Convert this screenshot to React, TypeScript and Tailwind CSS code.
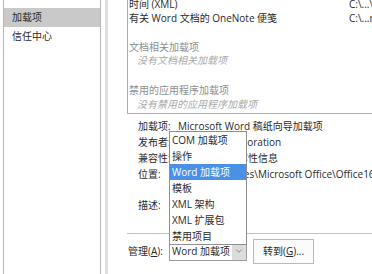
import React from "react";
import { ChevronDown } from "lucide-react";

const dropItems = ["COM 加载项", "操作", "Word 加载项", "模板", "XML 架构", "XML 扩展包", "禁用项目"];

const details = [
  { label: "加载项:", value: "Microsoft Word 稿纸向导加载项" },
  { label: "发布者:", value: "Microsoft Corporation" },
  { label: "兼容性:", value: "没有可用的兼容性信息" },
  { label: "位置:", value: "C:\\Program Files\\Microsoft Office\\Office16\\ADDINS" },
];

export default function App() {
  return (
    <div className="relative flex h-[274px] w-[372px] overflow-hidden bg-white font-['Open_Sans','Noto_Sans_CJK_SC',sans-serif] text-[10px] text-[#2a2a2a]">
      {/* left nav */}
      <div className="ml-[3px] w-[98px] shrink-0 border-x border-[#b8b8b8]">
        <div className="-mt-[11px] h-[19px] overflow-hidden pl-[8px] leading-[11px]">快速访问工具栏</div>
        <div className="h-[19px] bg-[#c9c9c9] pl-[8px] leading-[19px]">加载项</div>
        <div className="h-[19px] pl-[8px] leading-[19px]">信任中心</div>
      </div>
      <div className="ml-[4px] w-[3px] shrink-0 bg-[#e0e0e0]" />

      {/* main */}
      <div className="relative ml-[19px] flex flex-1 flex-col">
        <div className="-mt-px h-[115px] shrink-0 border-b border-l border-[#b0b0b0] pl-[1px]">
          <div className="-mt-[2px] flex h-[14px] leading-[14px]">
            <span className="w-[220px]">时间 (XML)</span>
            <span>C:\...\</span>
          </div>
          <div className="flex h-[14px] leading-[14px]">
            <span className="w-[220px]">有关 Word 文档的 OneNote 便笺</span>
            <span>C:\...r</span>
          </div>
          <div className="mt-[16px] h-[13px] leading-[13px] text-[#8e8e8e]">文档相关加载项</div>
          <div className="h-[13px] pl-[8px] italic leading-[13px] text-[#a8a8a8]">没有文档相关加载项</div>
          <div className="mt-[17px] h-[13px] leading-[13px] text-[#8e8e8e]">禁用的应用程序加载项</div>
          <div className="h-[14px] pl-[8px] italic leading-[14px] text-[#a8a8a8]">没有禁用的应用程序加载项</div>
        </div>

        <div className="mt-[4px] pl-[11px]">
          {details.map((d) => (
            <div key={d.label} className="flex h-[16px] whitespace-nowrap leading-[16px]">
              <span className="w-[40px] shrink-0">{d.label}</span>
              <span>{d.value}</span>
            </div>
          ))}
          <div className="mt-[15px] flex h-[16px] leading-[16px]">
            <span className="w-[40px]">描述:</span>
          </div>
        </div>

        <div className="mt-[20px] flex h-[25px] items-center border-t border-[#c4c4c4] pt-[10px]">
          <span className="w-[42px] shrink-0 pl-[1px]">
            管理(<span className="underline">A</span>):
          </span>
          <div className="flex h-[20px] w-[78px] items-center border border-[#9c9c9c] bg-white">
            <span className="flex-1 pl-[2px]">Word 加载项</span>
            <span className="flex h-full w-[14px] items-center justify-center bg-[#dcdcdc] text-[#555]">
              <ChevronDown size={10} strokeWidth={1.5} />
            </span>
          </div>
          <button className="ml-[6px] flex h-[25px] w-[61px] items-center justify-center border border-[#b9b9b9] bg-[#fbfbfb]">
            转到(<span className="underline">G</span>)...
          </button>
        </div>

        {/* open dropdown list */}
        <div className="absolute left-[42px] top-[131px] w-[78px] border border-[#8f8f8f] bg-white">
          {dropItems.map((item) => (
            <div
              key={item}
              className={
                item === "Word 加载项"
                  ? "h-[16px] bg-[#4a90e6] pl-[2px] leading-[16px] text-white"
                  : "h-[16px] pl-[2px] leading-[16px]"
              }
            >
              {item}
            </div>
          ))}
        </div>
      </div>
    </div>
  );
}
